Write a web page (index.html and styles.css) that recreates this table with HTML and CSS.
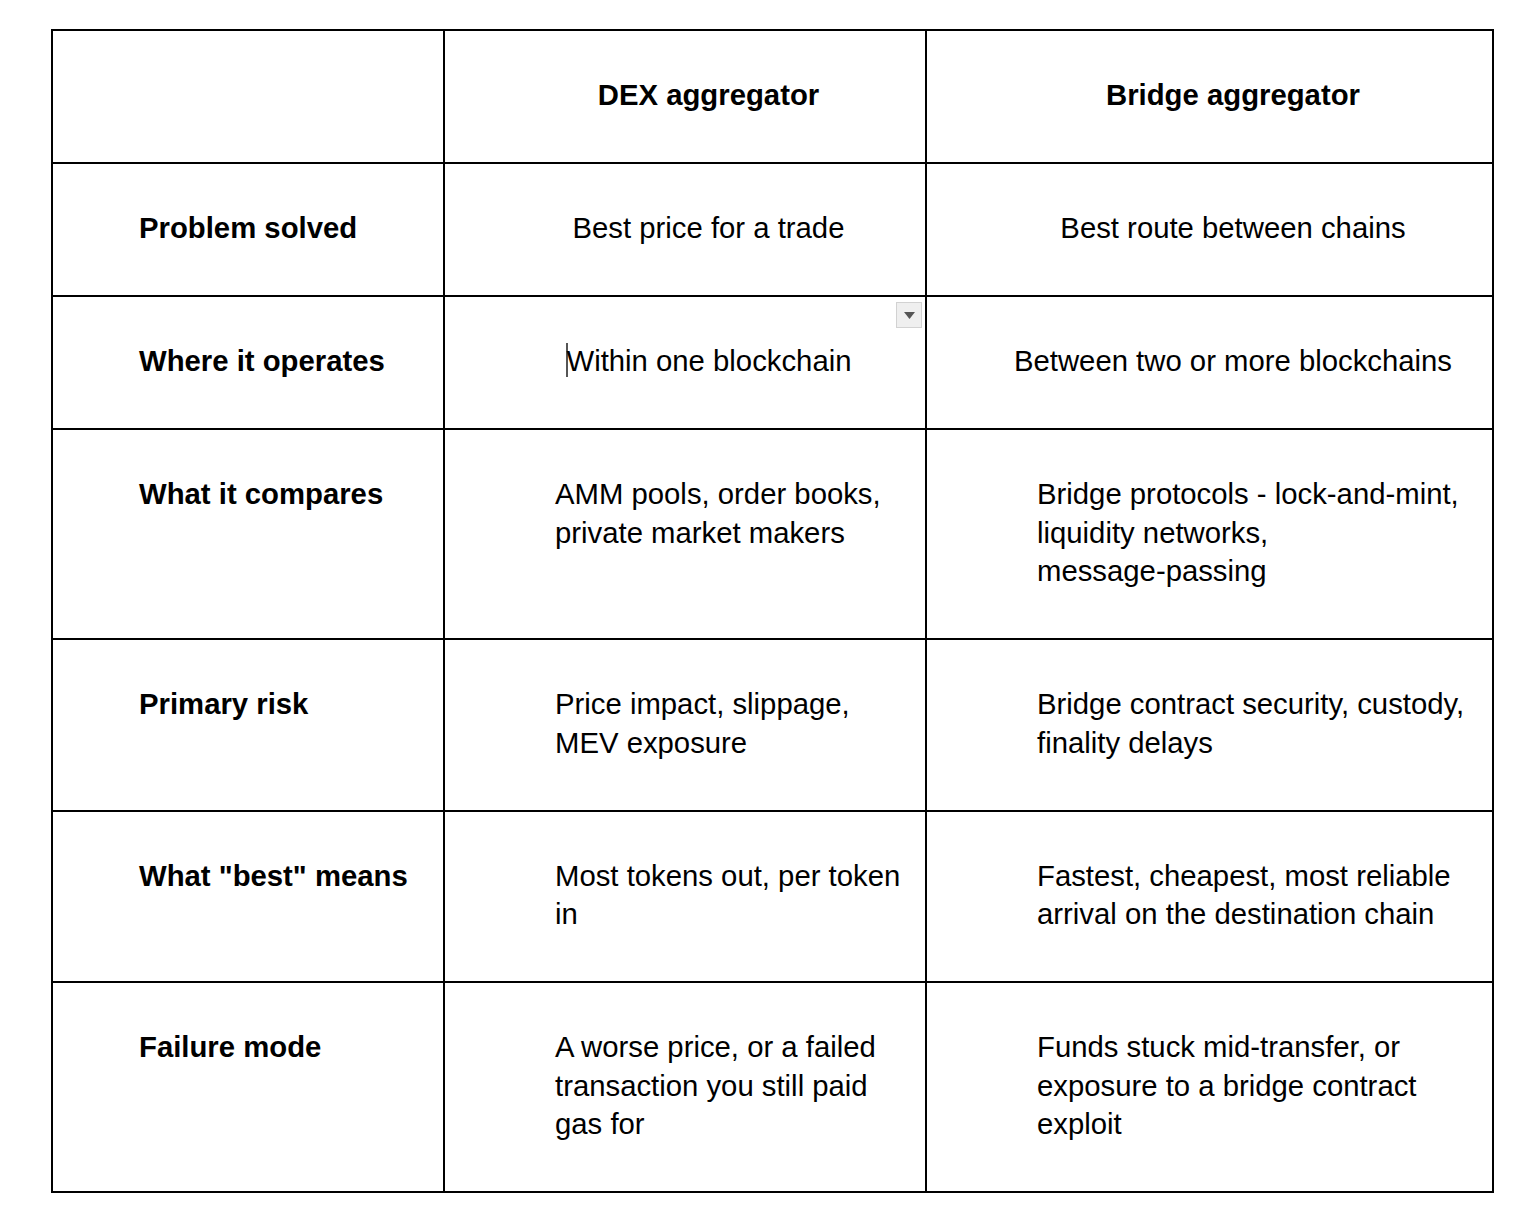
FILE: index.html
```html
<!DOCTYPE html>
<html lang="en">
<head>
<meta charset="utf-8">
<title>DEX aggregator vs Bridge aggregator</title>
<link rel="stylesheet" href="styles.css">
</head>
<body>
<table class="cmp">
  <colgroup>
    <col class="c1">
    <col class="c2">
    <col class="c3">
  </colgroup>
  <tr>
    <td class="label"></td>
    <td class="center head">DEX aggregator</td>
    <td class="center head">Bridge aggregator</td>
  </tr>
  <tr>
    <td class="label">Problem solved</td>
    <td class="center">Best price for a trade</td>
    <td class="center">Best route between chains</td>
  </tr>
  <tr>
    <td class="label">Where it operates</td>
    <td class="center has-menu"><span class="caret"></span>Within one blockchain<span class="menu-btn"><svg width="11" height="7" viewBox="0 0 11 7"><path d="M0 0H11L5.5 7Z" fill="#555"/></svg></span></td>
    <td class="center">Between two or more blockchains</td>
  </tr>
  <tr>
    <td class="label">What it compares</td>
    <td class="left">AMM pools, order books, private market makers</td>
    <td class="left">Bridge protocols - lock-and-mint, liquidity networks, <span class="nowrap">message-passing</span></td>
  </tr>
  <tr>
    <td class="label">Primary risk</td>
    <td class="left">Price impact, slippage, MEV exposure</td>
    <td class="left">Bridge contract security, custody, finality delays</td>
  </tr>
  <tr>
    <td class="label">What "best" means</td>
    <td class="left">Most tokens out, per token in</td>
    <td class="left">Fastest, cheapest, most reliable arrival on the destination chain</td>
  </tr>
  <tr>
    <td class="label">Failure mode</td>
    <td class="left">A worse price, or a failed transaction you still paid gas for</td>
    <td class="left">Funds stuck mid-transfer, or exposure to a bridge contract exploit</td>
  </tr>
</table>
</body>
</html>
```

FILE: styles.css
```css
html, body {
  margin: 0;
  padding: 0;
  background: #ffffff;
}

body {
  padding: 29px 0 0 51px;
  font-family: "Liberation Sans", Arial, sans-serif;
  font-size: 29.3px;
  line-height: 38.5px;
  color: #000000;
}

.cmp {
  border-collapse: separate;
  border-spacing: 0;
  table-layout: fixed;
  width: 1443px;
  border-top: 2px solid #000;
  border-left: 2px solid #000;
}

.c1 { width: 392px; }
.c2 { width: 482px; }
.c3 { width: 567px; }

.cmp td {
  box-sizing: border-box;
  border-right: 2px solid #000;
  border-bottom: 2px solid #000;
  padding: 45px 15px 47.5px 0;
  vertical-align: top;
  text-align: left;
  font-weight: normal;
}

.cmp td.label {
  padding-left: 86px;
  font-weight: bold;
}

.cmp td.center {
  padding-left: 62px;
  text-align: center;
}

.cmp td.head {
  font-weight: bold;
}

.cmp td.left {
  padding-left: 110px;
}

.nowrap {
  white-space: nowrap;
}

.has-menu {
  position: relative;
}

.caret {
  display: inline-block;
  width: 0;
  height: 34px;
  border-left: 2px solid #555;
  margin-right: -1px;
  vertical-align: top;
  margin-top: 1px;
}

.menu-btn {
  position: absolute;
  top: 5px;
  right: 3px;
  width: 26px;
  height: 26px;
  box-sizing: border-box;
  border: 1px solid #d2d2d2;
  background: #efefef;
  display: flex;
  align-items: center;
  justify-content: center;
}

.menu-btn svg {
  display: block;
}
```
